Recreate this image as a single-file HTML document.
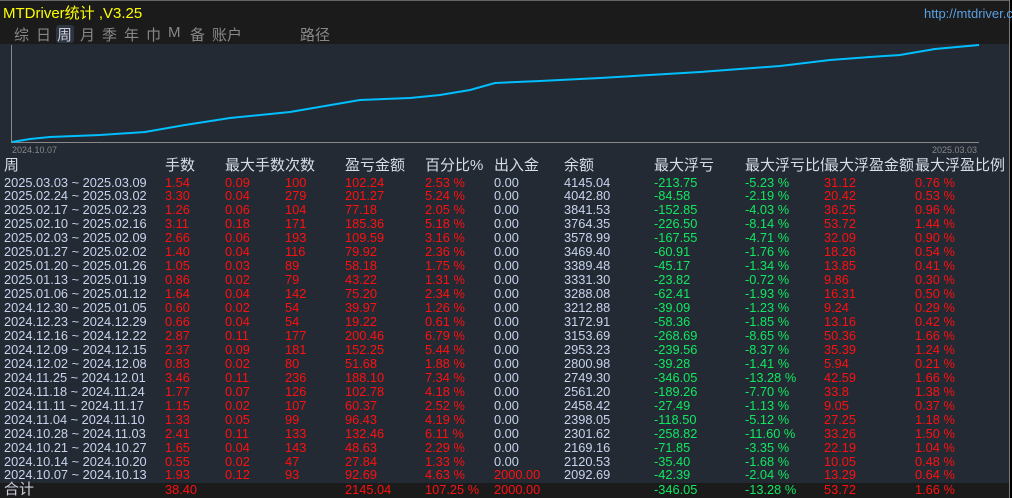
<!DOCTYPE html><html><head><meta charset="utf-8"><style>
body{margin:0;width:1012px;height:498px;background:#232a33;overflow:hidden;position:relative;font-family:"Liberation Sans","Noto Sans CJK SC",sans-serif}
.top{position:absolute;left:0;top:0;width:1009px;height:43px;background:#1b1b1b;border-top:1px solid #666}
.r{position:absolute;left:0;height:14px;line-height:14px;font-size:12.8px;width:1009px}
.r span{position:absolute;white-space:nowrap}
.d{color:#c8d4ee}.e{color:#ff1010}.g{color:#10e860}
.h{color:#d8dde8;font-size:15px}
.m{position:absolute;top:24px;color:#888;font-size:15px}
</style></head><body>
<div class="top"></div>
<div style="position:absolute;left:1009px;top:0;width:3px;height:498px;background:#000;border-left:1px solid #777"></div>
<div style="position:absolute;left:3px;top:2px;color:#ffff00;font-size:15px">MTDriver统计 ,V3.25</div>
<div style="position:absolute;left:924px;top:6px;color:#5aa0e0;font-size:13px">http://mtdriver.c</div>
<div style="position:absolute;left:56px;top:25px;width:18px;height:18px;background:#2d3540;border-radius:3px"></div>
<span class="m" style="left:14px">综</span><span class="m" style="left:36px">日</span><span class="m" style="left:57px;color:#ccd">周</span><span class="m" style="left:80px">月</span><span class="m" style="left:102px">季</span><span class="m" style="left:124px">年</span><span class="m" style="left:146px">巾</span><span class="m" style="left:168px">M</span><span class="m" style="left:190px">备</span><span class="m" style="left:212px">账户</span><span class="m" style="left:300px">路径</span>
<svg style="position:absolute;left:0;top:0" width="1009" height="160">
<line x1="11.5" y1="45" x2="11.5" y2="142" stroke="#888"/>
<line x1="11" y1="142.5" x2="979" y2="142.5" stroke="#888"/>
<polyline fill="none" stroke="#00bfff" stroke-width="2" points="12,142 30,139 50,137 100,135 145,132 185,125 230,118 290,112 360,100 410,98 440,95 470,90 495,83 540,81 600,78 700,72 780,66 830,60 870,57 900,55 935,49 979,45"/>
<text x="12" y="153" fill="#888" font-size="9" font-family="Liberation Sans">2024.10.07</text>
<text x="977" y="153" fill="#888" font-size="9" font-family="Liberation Sans" text-anchor="end">2025.03.03</text>
</svg>
<div class="r h" style="top:157px;height:18px;line-height:18px">
<span style="left:4px">周</span><span style="left:165px">手数</span><span style="left:225px">最大手数次数</span><span style="left:345px">盈亏金额</span><span style="left:425px">百分比%</span><span style="left:494px">出入金</span><span style="left:564px">余额</span><span style="left:654px">最大浮亏</span><span style="left:745px">最大浮亏比例</span><span style="left:824px;background:#232a33">最大浮盈金额</span><span style="left:915px;background:#232a33">最大浮盈比例</span></div>
<div id="rows"></div>
<div style="position:absolute;left:0;top:483px;width:1009px;height:15px;background:#1b1b1b"></div>
<div class="r" style="top:483px"><span class="h" style="left:4px;color:#ccd">合计</span><span class="e" style="left:165px">38.40</span><span class="e" style="left:345px">2145.04</span><span class="e" style="left:425px">107.25 %</span><span class="e" style="left:494px">2000.00</span><span class="g" style="left:654px">-346.05</span><span class="g" style="left:745px">-13.28 %</span><span class="e" style="left:824px">53.72</span><span class="e" style="left:915px">1.66 %</span></div>
<script>
var D=[["2025.03.03 ~ 2025.03.09","1.54","0.09","100","102.24","2.53 %","0.00","4145.04","-213.75","-5.23 %","31.12","0.76 %"],
["2025.02.24 ~ 2025.03.02","3.30","0.04","279","201.27","5.24 %","0.00","4042.80","-84.58","-2.19 %","20.42","0.53 %"],
["2025.02.17 ~ 2025.02.23","1.26","0.06","104","77.18","2.05 %","0.00","3841.53","-152.85","-4.03 %","36.25","0.96 %"],
["2025.02.10 ~ 2025.02.16","3.11","0.18","171","185.36","5.18 %","0.00","3764.35","-226.50","-8.14 %","53.72","1.44 %"],
["2025.02.03 ~ 2025.02.09","2.66","0.06","193","109.59","3.16 %","0.00","3578.99","-167.55","-4.71 %","32.09","0.90 %"],
["2025.01.27 ~ 2025.02.02","1.40","0.04","116","79.92","2.36 %","0.00","3469.40","-60.91","-1.76 %","18.26","0.54 %"],
["2025.01.20 ~ 2025.01.26","1.05","0.03","89","58.18","1.75 %","0.00","3389.48","-45.17","-1.34 %","13.85","0.41 %"],
["2025.01.13 ~ 2025.01.19","0.86","0.02","79","43.22","1.31 %","0.00","3331.30","-23.82","-0.72 %","9.86","0.30 %"],
["2025.01.06 ~ 2025.01.12","1.64","0.04","142","75.20","2.34 %","0.00","3288.08","-62.41","-1.93 %","16.31","0.50 %"],
["2024.12.30 ~ 2025.01.05","0.60","0.02","54","39.97","1.26 %","0.00","3212.88","-39.09","-1.23 %","9.24","0.29 %"],
["2024.12.23 ~ 2024.12.29","0.66","0.04","54","19.22","0.61 %","0.00","3172.91","-58.36","-1.85 %","13.16","0.42 %"],
["2024.12.16 ~ 2024.12.22","2.87","0.11","177","200.46","6.79 %","0.00","3153.69","-268.69","-8.65 %","50.36","1.66 %"],
["2024.12.09 ~ 2024.12.15","2.37","0.09","181","152.25","5.44 %","0.00","2953.23","-239.56","-8.37 %","35.39","1.24 %"],
["2024.12.02 ~ 2024.12.08","0.83","0.02","80","51.68","1.88 %","0.00","2800.98","-39.28","-1.41 %","5.94","0.21 %"],
["2024.11.25 ~ 2024.12.01","3.46","0.11","236","188.10","7.34 %","0.00","2749.30","-346.05","-13.28 %","42.59","1.66 %"],
["2024.11.18 ~ 2024.11.24","1.77","0.07","126","102.78","4.18 %","0.00","2561.20","-189.26","-7.70 %","33.8","1.38 %"],
["2024.11.11 ~ 2024.11.17","1.15","0.02","107","60.37","2.52 %","0.00","2458.42","-27.49","-1.13 %","9.05","0.37 %"],
["2024.11.04 ~ 2024.11.10","1.33","0.05","99","96.43","4.19 %","0.00","2398.05","-118.50","-5.12 %","27.25","1.18 %"],
["2024.10.28 ~ 2024.11.03","2.41","0.11","133","132.46","6.11 %","0.00","2301.62","-258.82","-11.60 %","33.26","1.50 %"],
["2024.10.21 ~ 2024.10.27","1.65","0.04","143","48.63","2.29 %","0.00","2169.16","-71.85","-3.35 %","22.19","1.04 %"],
["2024.10.14 ~ 2024.10.20","0.55","0.02","47","27.84","1.33 %","0.00","2120.53","-35.40","-1.68 %","10.05","0.48 %"],
["2024.10.07 ~ 2024.10.13","1.93","0.12","93","92.69","4.63 %","2000.00","2092.69","-42.39","-2.04 %","13.29","0.64 %"]];
var X=[4,165,225,285,345,425,494,564,654,745,824,915];
var h="";
D.forEach(function(r,i){h+='<div class="r" style="top:'+(175.5+i*13.95)+'px">';r.forEach(function(v,j){var c=j==0?'d':(j==6||j==7)?(v=="2000.00"?'e':'d'):(j==8||j==9)?'g':'e';h+='<span class="'+c+'" style="left:'+X[j]+'px">'+v+'</span>';});h+='</div>';});
document.getElementById('rows').innerHTML=h;
</script>
</body></html>
